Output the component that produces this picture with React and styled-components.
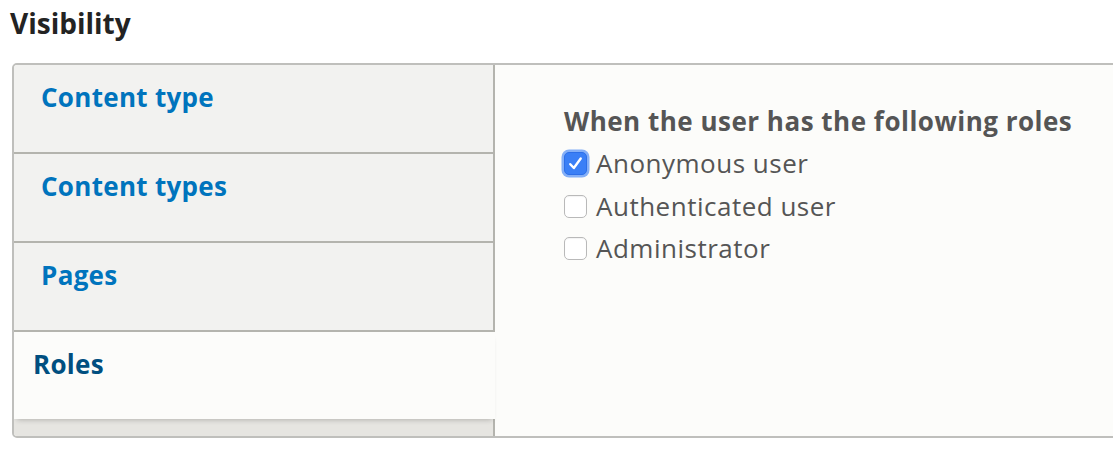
import React from 'react';
import styled, { createGlobalStyle } from 'styled-components';

const GlobalStyle = createGlobalStyle`
    html, body {
        margin: 0;
        padding: 0;
        background: #ffffff;
        overflow: hidden;
    }
    body {
        font-family: 'Open Sans', 'Liberation Sans', sans-serif;
    }
`

const Page = styled.div`
    display: flex;
    flex-direction: column;
    width: 1113px;
    height: 454px;
`

const Heading = styled.h2`
    margin: 6px 0 0 10px;
    font-size: 28px;
    line-height: 34px;
    font-weight: 700;
    color: #232323;
`

const TabsBox = styled.div`
    display: flex;
    margin: 23px 0 0 12px;
    width: 1140px;
    height: 371px;
    border: 2px solid #bfbfbc;
    border-radius: 5px;
    overflow: hidden;
    background: #fcfcfa;
`

const Menu = styled.ul`
    display: flex;
    flex-direction: column;
    list-style: none;
    margin: 0;
    padding: 0;
    width: 481px;
    flex-shrink: 0;
`

const Tab = styled.li`
    box-sizing: content-box;
    height: 73px;
    padding: 14px 0 0 ${props => props.selected ? '19px' : '27px'};
    width: ${props => props.selected ? '462px' : '452px'};
    background: ${props => props.selected ? '#fcfcfa' : '#f2f2f0'};
    border-right: ${props => props.selected ? '0' : '2px solid #b4b4ae'};
    border-bottom: ${props => props.selected ? '0' : '2px solid #b4b4ae'};
    position: relative;
    z-index: ${props => props.selected ? 1 : 0};
    box-shadow: ${props => props.selected ? '0 4px 5px -3px rgba(0,0,0,0.22)' : 'none'};
`

const TabLink = styled.a`
    display: block;
    font-size: 26px;
    line-height: 36px;
    font-weight: 700;
    letter-spacing: 0.3px;
    text-decoration: none;
    color: ${props => props.selected ? '#004f80' : '#0074bd'};
`

const MenuFiller = styled.li`
    flex: 1;
    background: #e6e5e1;
    border-right: 2px solid #b4b4ae;
`

const Pane = styled.div`
    flex: 1;
    display: flex;
    flex-direction: column;
    padding: 38px 0 0 69px;
    background: #fcfcfa;
    color: #555555;
`

const PaneTitle = styled.div`
    font-size: 26px;
    line-height: 36px;
    font-weight: 700;
    letter-spacing: 0.5px;
    margin-bottom: 6px;
`

const Option = styled.label`
    display: flex;
    align-items: center;
    gap: 9px;
    height: 36px;
    margin-bottom: 6.5px;
    font-size: 26px;
    line-height: 36px;
    letter-spacing: 0.5px;
`

const Box = styled.span`
    display: flex;
    align-items: center;
    justify-content: center;
    width: 23px;
    height: 23px;
    box-sizing: border-box;
    border-radius: 5px;
    margin-top: 1px;
    border: 1px solid ${props => props.checked ? '#2d6fe8' : '#b9b9b9'};
    background: ${props => props.checked ? '#3a7ff6' : '#ffffff'};
    box-shadow: ${props => props.checked ? '0 0 0 2.5px rgba(92,150,245,0.75)' : 'inset 0 1px 1px rgba(0,0,0,0.05)'};
`

const tabs = [
    { label: 'Content type' },
    { label: 'Content types' },
    { label: 'Pages' },
    { label: 'Roles', selected: true },
]

const roles = [
    { label: 'Anonymous user', checked: true },
    { label: 'Authenticated user' },
    { label: 'Administrator' },
]

const Check = () => (
    <svg width="19" height="19" viewBox="0 0 16 16">
        <path d="M3.6 8.6 L6.6 11.8 L12.4 3.8" fill="none" stroke="#ffffff" strokeWidth="2" strokeLinecap="round" strokeLinejoin="round" />
    </svg>
)

export default function App() {
    return (
        <Page>
            <GlobalStyle />
            <Heading>Visibility</Heading>
            <TabsBox>
                <Menu>
                    {tabs.map(t => (
                        <Tab key={t.label} selected={t.selected}>
                            <TabLink href="#" selected={t.selected}>{t.label}</TabLink>
                        </Tab>
                    ))}
                    <MenuFiller />
                </Menu>
                <Pane>
                    <PaneTitle>When the user has the following roles</PaneTitle>
                    {roles.map(r => (
                        <Option key={r.label}>
                            <Box checked={r.checked}>{r.checked && <Check />}</Box>
                            {r.label}
                        </Option>
                    ))}
                </Pane>
            </TabsBox>
        </Page>
    )
}
